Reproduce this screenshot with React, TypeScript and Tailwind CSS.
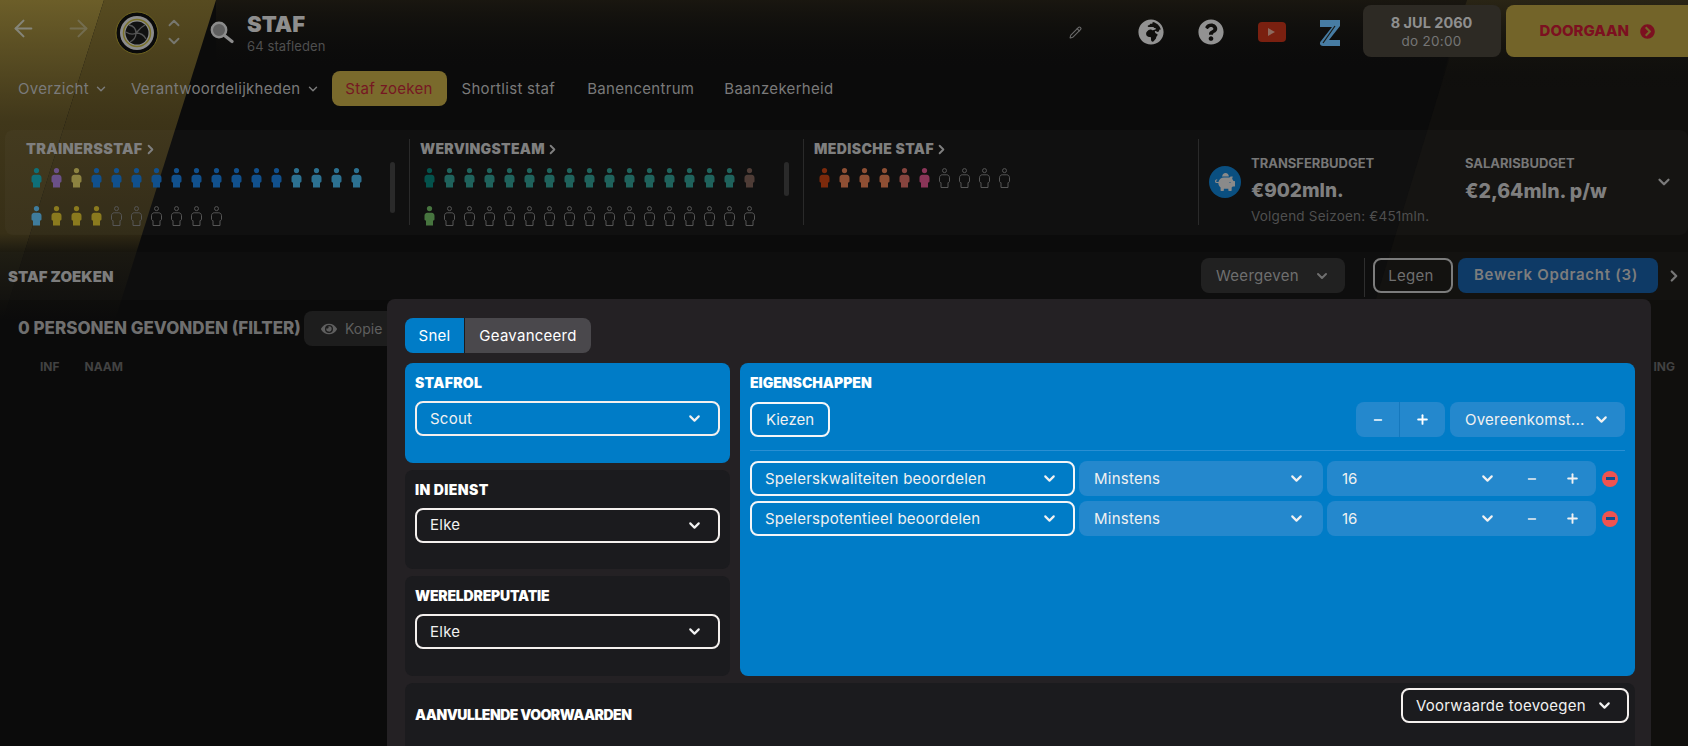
import { ArrowLeft, ArrowRight, ChevronDown, ChevronRight, ChevronUp, Minus, Pencil, Plus } from 'lucide-react'
import { FaChevronCircleRight, FaEye, FaGlobeAfrica, FaPiggyBank, FaQuestionCircle } from 'react-icons/fa'

const font = { fontFamily: 'Inter, "Liberation Sans", sans-serif' }

const Person = ({ color }: { color?: string }) => (
    <svg width="11" height="20" viewBox="0 0 11 20" className="shrink-0">
        <circle cx="5.5" cy="2.6" r={color ? 2.6 : 2} fill={color ?? 'none'} stroke={color ? 'none' : '#565656'} strokeWidth="1" />
        <path
            d="M3.2 6.8h4.6c1.6 0 2.7 1.4 2.7 3v3.4c0 .9-.6 1.4-1.5 1.4v4.9h-7v-4.9c-.9 0-1.5-.5-1.5-1.4V9.800c0-1.600 1.100-3 2.700-3z"
            fill={color ?? 'none'}
            stroke={color ? 'none' : '#565656'}
            strokeWidth="1"
        />
    </svg>
)

const rep = (color: string, n: number) => Array.from({ length: n }, () => color)

const PeopleRow = ({ people }: { people: (string | undefined)[] }) => (
    <div className="flex gap-[9px]">
        {people.map((c, i) => (
            <Person key={i} color={c} />
        ))}
    </div>
)

const e = (n: number) => Array.from({ length: n }, () => undefined as string | undefined)

const Select = ({ label, className }: { label: string; className: string }) => (
    <div className={`flex h-[35px] items-center justify-between rounded-lg text-[15px] text-[#f1f1f1] ${className}`}>
        <span className="truncate pt-px tracking-[0.25px]">{label}</span>
        <ChevronDown size={17} strokeWidth={3} className="shrink-0" />
    </div>
)

const Card = ({ title, label, blue, track }: { title: string; label: string; blue?: boolean; track: string }) => (
    <div className={`flex-1 rounded-lg px-[10px] pt-[11px] ${blue ? 'bg-[#007cc7]' : 'bg-[#1b1b1e]'}`}>
        <div className={`text-[14px] font-black leading-[18px] text-white ${track}`}>{title}</div>
        <Select label={label} className="mt-[9px] border-2 border-[#f4f0ee] pl-[13px] pr-[15px]" />
    </div>
)

const CritRow = ({ label }: { label: string }) => (
    <div className="flex h-[35px] items-center gap-1">
        <Select label={label} className="w-[325px] border-2 border-[#f4f6f8] pl-[13px] pr-[15px]" />
        <Select label="Minstens" className="w-[244px] bg-[#2488cd] pl-[15px] pr-[18px]" />
        <div className="flex h-[35px] w-[269px] items-center rounded-lg bg-[#2488cd] pl-[15px] text-[15px] text-[#f1f1f1]">
            <span className="w-[137px] pt-px">16</span>
            <ChevronDown size={17} strokeWidth={3} />
            <Minus size={12} strokeWidth={3} className="ml-[30px]" />
            <Plus size={15} strokeWidth={3} className="ml-[27px]" />
        </div>
        <div className="ml-[2px] flex h-4 w-4 items-center justify-center rounded-full bg-[#ef5350]">
            <div className="h-[2.500px] w-[9px] bg-[#0d4f8f]" />
        </div>
    </div>
)

export default function App() {
    return (
        <div style={font} className="relative h-[746px] w-[1688px] overflow-hidden bg-[#0b0b0b]">
            {/* achtergrond met gouden lichtbundels */}
            <svg className="absolute inset-0" width="1688" height="746">
                <defs>
                    <linearGradient id="a" gradientUnits="userSpaceOnUse" x1="0" y1="0" x2="0" y2="320">
                        <stop offset="0" stopColor="#6c5e29" />
                        <stop offset="0.38" stopColor="#40371a" />
                        <stop offset="0.73" stopColor="#372f17" />
                        <stop offset="0.79" stopColor="#1c1a10" />
                        <stop offset="1" stopColor="#0b0b0b" />
                    </linearGradient>
                    <linearGradient id="b" gradientUnits="userSpaceOnUse" x1="0" y1="0" x2="0" y2="320">
                        <stop offset="0" stopColor="#574b20" />
                        <stop offset="0.38" stopColor="#3d3418" />
                        <stop offset="0.73" stopColor="#2f2814" />
                        <stop offset="0.79" stopColor="#17150e" />
                        <stop offset="1" stopColor="#0b0b0b" />
                    </linearGradient>
                    <linearGradient id="c" x1="0" y1="0" x2="0" y2="1">
                        <stop offset="0" stopColor="#2a2515" stopOpacity="1" />
                        <stop offset="1" stopColor="#0b0b0b" stopOpacity="0" />
                    </linearGradient>
                    <linearGradient id="d" x1="0" y1="0" x2="0" y2="1">
                        <stop offset="0" stopColor="#1a1710" stopOpacity="0.95" />
                        <stop offset="1" stopColor="#0b0b0b" stopOpacity="0" />
                    </linearGradient>
                </defs>
                <polygon points="0,0 104,0 3,320 0,320" fill="url(#a)" />
                <polygon points="104,0 216,0 115,320 3,320" fill="url(#b)" />
                <rect x="216" y="0" width="1472" height="70" fill="url(#d)" />
                <polygon points="1467,0 1688,0 1688,746 1240,746" fill="#14120f" opacity="0.6" />
                <polygon points="1467,0 1688,0 1688,90 1438,90" fill="url(#c)" />
            </svg>

            <div className="relative flex h-full flex-col">
                {/* bovenbalk */}
                <div className="flex h-[62px] items-start pt-[5px]">
                    <div className="mt-[10px] flex items-center pl-[10px] text-[#85857a]">
                        <ArrowLeft size={27} strokeWidth={1.8} />
                        <ArrowRight size={27} strokeWidth={1.8} className="ml-[28px] opacity-50" />
                    </div>
                    <svg width="44" height="44" viewBox="0 0 44 44" className="ml-[23px] mt-[6px]">
                        <circle cx="22" cy="22" r="21" fill="#0a0a0a" stroke="#6f6420" strokeWidth="1" />
                        <circle cx="22" cy="22" r="17" fill="#8c8c8c" />
                        <circle cx="22" cy="22" r="13.500" fill="#8c8c8c" stroke="#7a7128" strokeWidth="1.500" />
                        <circle cx="22" cy="22" r="11.500" fill="#111" />
                        <path d="M14 14c5 1 7 4 7 8s-2 7-6 9M30 14c-4 2-6 5-9 8M21 22c4 0 8 2 10 6M21 22c-3 2-7 1-10-1" stroke="#555" strokeWidth="1.300" fill="none" />
                    </svg>
                    <div className="ml-[6px] mt-[9px] flex flex-col items-center text-[#77776f]">
                        <ChevronUp size={18} strokeWidth={2.5} />
                        <ChevronDown size={18} strokeWidth={2.5} />
                    </div>
                    <svg width="24" height="24" viewBox="0 0 24 24" className="ml-[27px] mt-[16px]">
                        <circle cx="9" cy="9" r="7.200" fill="#5f5f5f" stroke="#8c8c8c" strokeWidth="2.400" />
                        <path d="M14.500 14.500 22 20.500" stroke="#8c8c8c" strokeWidth="3.200" strokeLinecap="round" />
                    </svg>
                    <div className="ml-[13px] mt-[7px]">
                        <div className="text-[22px] font-black leading-[24px] text-[#8e8e8e]">STAF</div>
                        <div className="mt-[2px] text-[13px] leading-[16px] tracking-[0.1px] text-[#4f4f4f]">64 stafleden</div>
                    </div>
                    <Pencil size={13} className="ml-[743px] mt-[21px] text-[#6a6a6a]" />
                    <FaGlobeAfrica size={26} className="ml-[56px] mt-[14px] text-[#929292]" />
                    <FaQuestionCircle size={26} className="ml-[34px] mt-[14px] text-[#929292]" />
                    <div className="ml-[34px] mt-[17px] flex h-[20px] w-[28px] items-center justify-center rounded-[4px] bg-[#7a2010]">
                        <div className="h-0 w-0 border-y-[4px] border-l-[7px] border-y-transparent border-l-[#8d6a5f]" />
                    </div>
                    <svg width="22" height="26" viewBox="0 0 22 26" className="ml-[33px] mt-[15px]">
                        <path d="M1 0h20v6L10 20h11v6H4c-3 0-4-3-2-5L13 7H1z" fill="#477ca3" />
                        <path d="M4 23 16 6" stroke="#1a1a14" strokeWidth="1.200" />
                    </svg>
                    <div className="ml-[22px] flex h-[52px] w-[138px] flex-col items-center justify-center rounded-lg bg-[#2d2a24]">
                        <div className="text-[14.500px] font-bold leading-[19px] text-[#8f8f8f]">8 JUL 2060</div>
                        <div className="text-[13.500px] leading-[18px] tracking-[0.3px] text-[#757575]">do 20:00</div>
                    </div>
                    <div className="ml-[5px] flex h-[52px] flex-1 items-center rounded-l-lg bg-[#736429] pl-[34px]">
                        <span className="text-[15px] font-extrabold text-[#7c1020]">DOORGAAN</span>
                        <FaChevronCircleRight size={15} className="ml-[11px] text-[#7c1020]" />
                    </div>
                </div>

                {/* navigatie */}
                <div className="mt-[9px] flex h-[35px] items-center text-[15px] tracking-[0.3px] text-[#7a7a7a]">
                    <div className="ml-[18px] flex items-center gap-[5px]">
                        <span className="pt-px">Overzicht</span>
                        <ChevronDown size={14} strokeWidth={2.5} />
                    </div>
                    <div className="ml-[23px] flex items-center gap-[5px]">
                        <span className="pt-px">Verantwoordelijkheden</span>
                        <ChevronDown size={14} strokeWidth={2.5} />
                    </div>
                    <div className="ml-[12px] flex h-[35px] w-[115px] items-center justify-center rounded-lg bg-[#7a6a2c] pt-px text-[#761722]">Staf zoeken</div>
                    <div className="ml-[15px] pt-px">Shortlist staf</div>
                    <div className="ml-[32px] pt-px">Banencentrum</div>
                    <div className="ml-[30px] pt-px">Baanzekerheid</div>
                </div>

                {/* stafoverzicht */}
                <div className="ml-[5px] mt-[24px] flex h-[105px] items-start rounded-lg bg-[#ffffff06] pt-[9px]">
                    <div className="flex h-[86px] w-[404px] pl-[21px]">
                        <div className="w-[364px]">
                            <div className="flex items-center text-[14.500px] font-black leading-[20px] tracking-[0.3px] text-[#7f7f7f]">
                                TRAINERSSTAF<ChevronRight size={15} strokeWidth={3} />
                            </div>
                            <div className="ml-[5px] mt-[9px] flex flex-col gap-[18px]">
                                <PeopleRow people={['#0f6f78', '#6a5088', '#8c8240', ...rep('#11508c', 10), ...rep('#2c7191', 4)]} />
                                <PeopleRow people={['#3f7c9c', ...rep('#8a7a1e', 3), ...e(6)]} />
                            </div>
                        </div>
                        <div className="mt-[23px] h-[51px] w-[5px] rounded bg-[#2a2a2a]" />
                    </div>
                    <div className="flex h-[86px] w-[394px] border-l border-[#2a2a2a] pl-[10px]">
                        <div className="w-[364px]">
                            <div className="flex items-center text-[14px] font-black leading-[20px] tracking-[0.3px] text-[#7f7f7f]">
                                WERVINGSTEAM<ChevronRight size={15} strokeWidth={3} />
                            </div>
                            <div className="ml-[4px] mt-[9px] flex flex-col gap-[18px]">
                                <PeopleRow people={['#04524c', ...rep('#1f625c', 15), '#4e3c36']} />
                                <PeopleRow people={['#47753f', ...e(16)]} />
                            </div>
                        </div>
                        <div className="mt-[23px] h-[34px] w-[5px] rounded bg-[#2a2a2a]" />
                    </div>
                    <div className="h-[86px] w-[395px] border-l border-[#2a2a2a] pl-[10px]">
                        <div className="flex items-center text-[14px] font-black leading-[20px] tracking-[0.4px] text-[#7f7f7f]">
                            MEDISCHE STAF<ChevronRight size={15} strokeWidth={3} />
                        </div>
                        <div className="ml-[5px] mt-[9px]">
                            <PeopleRow people={['#7c2a0c', ...rep('#8e4f34', 3), '#86443e', '#8a3558', ...e(4)]} />
                        </div>
                    </div>
                    <div className="flex h-[86px] flex-1 items-center border-l border-[#2a2a2a] pl-[10px]">
                        <div className="flex h-8 w-8 items-center justify-center rounded-full bg-[#0a4f80]">
                            <FaPiggyBank size={20} className="text-[#8a8a8a]" />
                        </div>
                        <div className="ml-[10px] mt-[15px] w-[214px] self-start">
                            <div className="text-[13px] font-bold leading-[18px] text-[#777]">TRANSFERBUDGET</div>
                            <div className="mt-[6px] text-[19px] font-extrabold leading-[26px] text-[#7f7f7f]">€902mln.</div>
                            <div className="mt-[3px] text-[13.500px] leading-[18px] tracking-[0.2px] text-[#4f4f4f]">Volgend Seizoen: €451mln.</div>
                        </div>
                        <div className="mt-[15px] w-[190px] self-start">
                            <div className="text-[13px] font-bold leading-[18px] text-[#777]">SALARISBUDGET</div>
                            <div className="mt-[6px] text-[19.500px] font-extrabold leading-[26px] text-[#7f7f7f]">€2,64mln. p/w</div>
                        </div>
                        <ChevronDown size={18} strokeWidth={3} className="text-[#7a7a7a]" />
                    </div>
                </div>

                {/* titelbalk */}
                <div className="mt-[17px] flex h-[48px] items-start bg-[#ffffff04] pl-[8px] pt-[6px]">
                    <div className="mt-[10px] w-[1193px] text-[15px] font-black leading-[18px] text-[#7d7d7d]">STAF ZOEKEN</div>
                    <div className="flex h-[35px] w-[144px] items-center justify-between rounded-lg bg-[#212121] px-[15px] text-[15px] tracking-[0.3px] text-[#6f6f6f]">
                        <span className="pt-px">Weergeven</span>
                        <ChevronDown size={16} strokeWidth={3} />
                    </div>
                    <div className="ml-[19px] h-[39px] w-px bg-[#2e2e2e]" />
                    <div className="ml-[8px] flex h-[35px] w-[80px] items-center justify-center rounded-lg border-2 border-[#7c7c7c] pr-1 pt-px text-[15px] tracking-[0.3px] text-[#6f6f6f]">Legen</div>
                    <div className="ml-[5px] flex h-[35px] w-[200px] items-center justify-center rounded-lg bg-[#0e3a66] pr-1 text-[15px] font-semibold tracking-[0.7px] text-[#7d7d7d]">
                        Bewerk Opdracht (3)
                    </div>
                    <ChevronRight size={18} strokeWidth={3} className="ml-[7px] mt-[9px] text-[#777]" />
                </div>

                {/* resultaten */}
                <div className="mt-[11px] flex h-[35px] items-center">
                    <div className="ml-[18px] w-[286px] text-[17px] font-extrabold text-[#6f6f6f]">0 PERSONEN GEVONDEN (FILTER)</div>
                    <div className="flex h-[35px] w-[100px] items-center gap-2 rounded-lg bg-[#1d1d1d] pl-[17px] text-[14px] text-[#5f5f5f]">
                        <FaEye size={16} /> Kopie
                    </div>
                </div>
                <div className="mt-[12px] flex justify-between text-[12px] font-bold text-[#424242]">
                    <div className="flex">
                        <span className="ml-[40px]">INF</span>
                        <span className="ml-[25px]">NAAM</span>
                    </div>
                    <span className="mr-[13px]">ING</span>
                </div>
            </div>

            {/* opdracht venster */}
            <div className="absolute bottom-0 left-[387px] top-[299px] w-[1264px] rounded-t-lg bg-[#242124] pl-[18px] pr-[16px] pt-[19px]">
                <div className="flex h-[35px] w-[186px] overflow-hidden rounded-lg text-[15px] tracking-[0.25px] text-white">
                    <div className="flex w-[59px] items-center justify-center bg-[#007cc7] pt-px">Snel</div>
                    <div className="flex flex-1 items-center justify-center border-l border-[#1b1b1e] bg-[#4a484c] pt-px">Geavanceerd</div>
                </div>
                <div className="mt-[10px] flex h-[313px] gap-[10px]">
                    <div className="flex w-[325px] flex-col gap-[7px]">
                        <Card blue title="STAFROL" label="Scout" track="tracking-[0.3px]" />
                        <Card title="IN DIENST" label="Elke" track="tracking-[0.4px]" />
                        <Card title="WERELDREPUTATIE" label="Elke" track="tracking-[-0.2px]" />
                    </div>
                    <div className="flex-1 rounded-lg bg-[#007cc7] px-[10px] pt-[11px]">
                        <div className="text-[14px] font-black leading-[18px] text-white">EIGENSCHAPPEN</div>
                        <div className="mt-[10px] flex h-[35px] items-center justify-between">
                            <div className="flex h-[35px] w-[80px] items-center justify-center rounded-lg border-2 border-[#f4f6f8] pt-px text-[15px] text-[#f1f1f1]">Kiezen</div>
                            <div className="flex gap-[5px]">
                                <div className="flex h-[35px] w-[89px] overflow-hidden rounded-lg bg-[#2488cd] text-white">
                                    <div className="flex w-[44px] items-center justify-center border-r border-[#1578bd]">
                                        <Minus size={12} strokeWidth={3} />
                                    </div>
                                    <div className="flex flex-1 items-center justify-center">
                                        <Plus size={15} strokeWidth={3} />
                                    </div>
                                </div>
                                <Select label="Overeenkomst..." className="w-[175px] bg-[#2488cd] pl-[15px] pr-[15px]" />
                            </div>
                        </div>
                        <div className="mt-[13px] h-px w-full bg-[#2a8fd3]" />
                        <div className="mt-[10px] flex flex-col gap-[5px]">
                            <CritRow label="Spelerskwaliteiten beoordelen" />
                            <CritRow label="Spelerspotentieel beoordelen" />
                        </div>
                    </div>
                </div>
                <div className="mt-[7px] flex h-[70px] items-start justify-between rounded-t-lg bg-[#1b1b1e] pl-[10px] pr-[6px] pt-[5px]">
                    <div className="mt-[18px] text-[14px] font-black leading-[18px] tracking-[-0.5px] text-white">AANVULLENDE VOORWAARDEN</div>
                    <Select label="Voorwaarde toevoegen" className="w-[228px] border-2 border-[#f4f0ee] pl-[13px] pr-[14px]" />
                </div>
            </div>
        </div>
    )
}
